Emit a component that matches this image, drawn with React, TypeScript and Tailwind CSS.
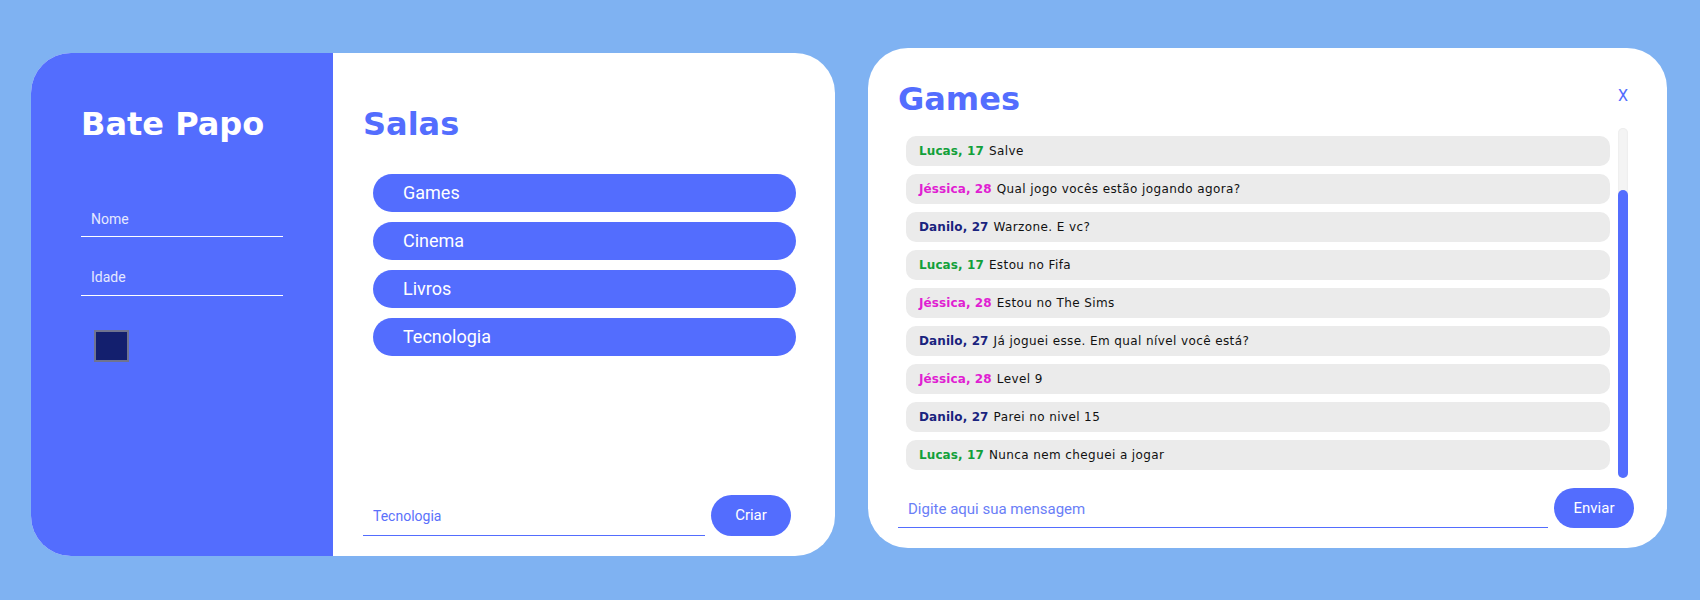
// Bate Papo – salas + chat
// ━━━━━━━━━━━━━━━━━━━━━━━━━━━━━━━━━━━━━━━━━━━━━━━━━━━━━━━━━━━━━━━━━━━━━━

const TITLE_FONT = "font-['DejaVu_Sans',Verdana,sans-serif]";
const UI_FONT = "font-['Roboto','Liberation_Sans',sans-serif]";

const rooms = ["Games", "Cinema", "Livros", "Tecnologia"];

type Msg = { name: string; age: number; text: string };

const nameColor: Record<string, string> = {
  Lucas: "text-[#12a03a]",
  "Jéssica": "text-[#e01ed2]",
  Danilo: "text-[#1a237e]",
};

const messages: Msg[] = [
  { name: "Lucas", age: 17, text: "Salve" },
  { name: "Jéssica", age: 28, text: "Qual jogo vocês estão jogando agora?" },
  { name: "Danilo", age: 27, text: "Warzone. E vc?" },
  { name: "Lucas", age: 17, text: "Estou no Fifa" },
  { name: "Jéssica", age: 28, text: "Estou no The Sims" },
  { name: "Danilo", age: 27, text: "Já joguei esse. Em qual nível você está?" },
  { name: "Jéssica", age: 28, text: "Level 9" },
  { name: "Danilo", age: 27, text: "Parei no nivel 15" },
  { name: "Lucas", age: 17, text: "Nunca nem cheguei a jogar" },
];

function LoginPanel() {
  return (
    <div className="w-[302px] shrink-0 bg-[#536dfe] pl-[50px] pt-[55px]">
      <h1 className={`${TITLE_FONT} text-[32px] leading-none font-bold text-white`}>Bate Papo</h1>
      <input
        placeholder="Nome"
        className={`${UI_FONT} mt-[61px] block w-[202px] h-[36px] bg-transparent border-b border-white pl-[10px] text-[14px] text-white placeholder:text-[#e4e8ff] outline-none`}
      />
      <input
        placeholder="Idade"
        className={`${UI_FONT} mt-[22px] block w-[202px] h-[37px] bg-transparent border-b border-white pl-[10px] text-[14px] text-white placeholder:text-[#e4e8ff] outline-none`}
      />
      <div className="mt-[34px] ml-[13px] w-[35px] h-[32px] border-2 border-[#6f7390] bg-[#131f6e]" />
    </div>
  );
}

function RoomsPanel() {
  return (
    <div className="flex-1 flex flex-col pl-[30px] pr-[44px] pt-[55px] pb-[20px]">
      <h2 className={`${TITLE_FONT} text-[32px] leading-none font-bold text-[#536dfe]`}>Salas</h2>
      <div className="mt-[34px] ml-[10px] w-[423px] flex flex-col gap-[10px]">
        {rooms.map((room) => (
          <button
            key={room}
            className={`${UI_FONT} h-[38px] rounded-full bg-[#536dfe] pl-[30px] pb-[2px] text-left text-[18px] text-white`}
          >
            {room}
          </button>
        ))}
      </div>
      <div className="mt-auto flex items-end gap-[6px]">
        <input
          placeholder="Tecnologia"
          className={`${UI_FONT} w-[342px] h-[37px] border-b border-[#536dfe] pl-[10px] pb-[2px] text-[14px] placeholder:text-[#5b71fb] outline-none`}
        />
        <button className={`${UI_FONT} w-[80px] h-[41px] rounded-full bg-[#536dfe] text-[15px] text-white`}>
          Criar
        </button>
      </div>
    </div>
  );
}

function ChatCard() {
  return (
    <div className="mt-[48px] w-[799px] h-[500px] shrink-0 rounded-[40px] bg-white flex flex-col pt-[35px] pl-[30px] pr-[33px] pb-[20px]">
      <div className="flex items-start justify-between">
        <h2 className={`${TITLE_FONT} text-[32px] leading-none font-bold text-[#536dfe]`}>Games</h2>
        <span className={`${UI_FONT} mt-[5px] mr-[6px] text-[16px] leading-none text-[#536dfe]`}>X</span>
      </div>

      <div className="mt-[13px] h-[350px] flex gap-[8px] pl-[8px]">
        <div className="w-[704px] pt-[8px] flex flex-col gap-[8px] overflow-hidden">
          {messages.map((m, i) => (
            <div
              key={i}
              className={`${TITLE_FONT} h-[30px] shrink-0 rounded-[10px] bg-[#ebebeb] pl-[13px] flex items-center text-[12px] text-[#111]`}
            >
              <span className={`font-bold tracking-[0.1px] ${nameColor[m.name]}`}>
                {m.name}, {m.age}
              </span>
              <span className="ml-[5px] tracking-[0.4px]">{m.text}</span>
            </div>
          ))}
        </div>
        {/* scrollbar */}
        <div className="relative w-[10px] h-[350px] rounded-full bg-[#f4f4f4] shadow-[inset_0_0_2px_rgba(0,0,0,0.08)]">
          <div className="absolute left-0 right-0 top-[62px] bottom-0 rounded-full bg-[#536dfe]" />
        </div>
      </div>

      <div className="mt-auto flex items-end gap-[6px]">
        <input
          placeholder="Digite aqui sua mensagem"
          className={`${UI_FONT} w-[650px] h-[37px] border-b border-[#536dfe] pl-[10px] pb-[1px] text-[15px] placeholder:text-[#6a7ef7] outline-none`}
        />
        <button className={`${UI_FONT} w-[80px] h-[40px] rounded-full bg-[#536dfe] text-[15px] text-white`}>
          Enviar
        </button>
      </div>
    </div>
  );
}

export default function App() {
  return (
    <div className="w-[1700px] h-[600px] bg-[#7fb2f2] flex items-start pl-[31px] gap-[33px]">
      <div className="mt-[53px] w-[804px] h-[503px] shrink-0 rounded-[40px] overflow-hidden flex bg-white">
        <LoginPanel />
        <RoomsPanel />
      </div>
      <ChatCard />
    </div>
  );
}
